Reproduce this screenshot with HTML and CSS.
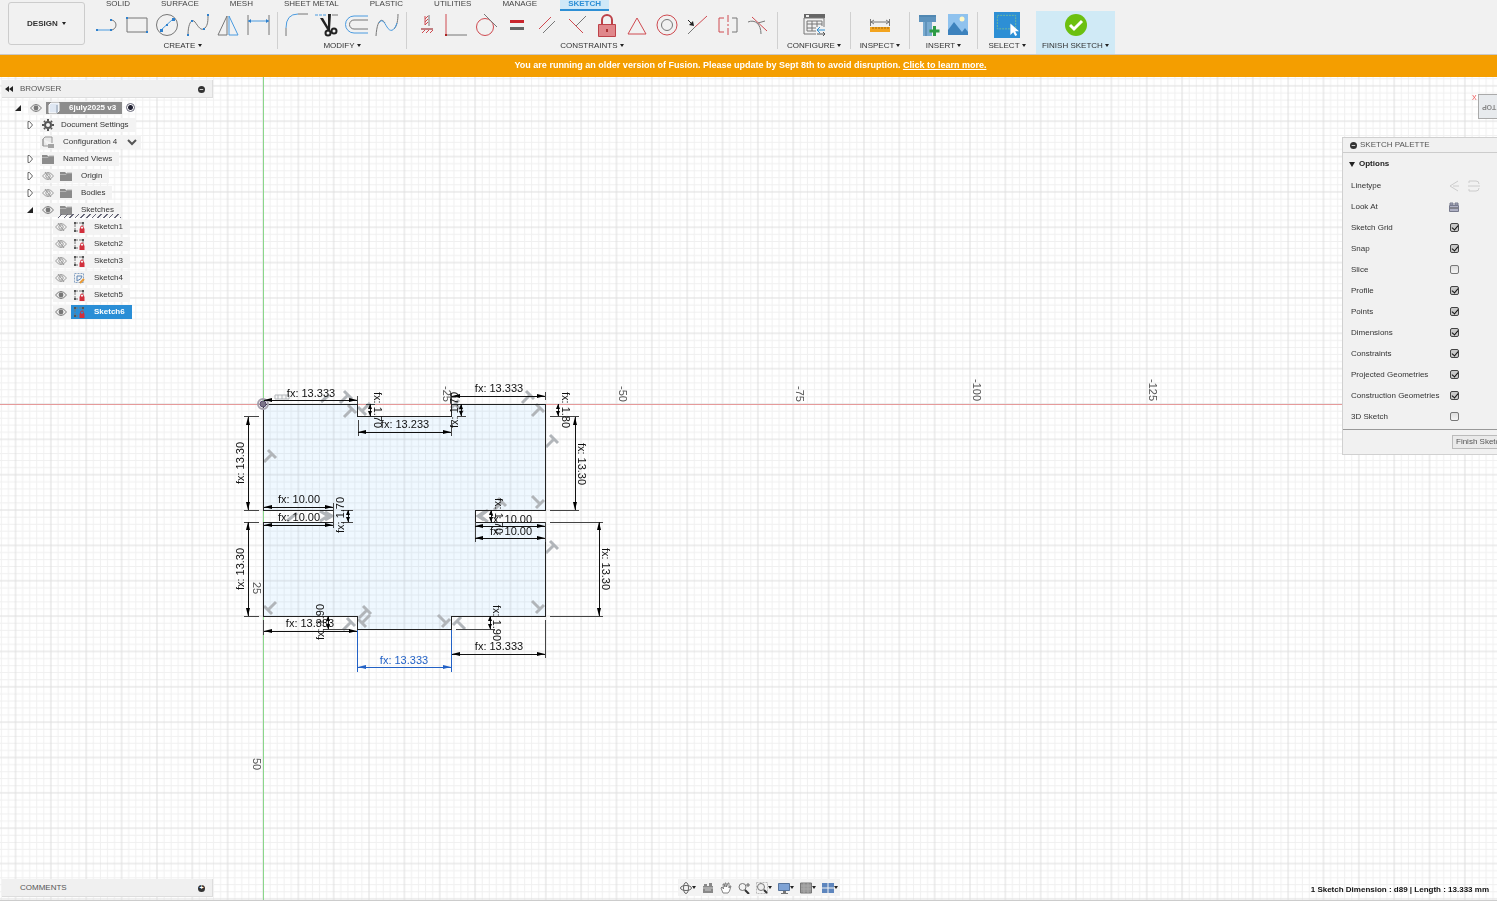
FILE: index.html
```html
<!DOCTYPE html>
<html lang="en">
<head>
  <meta charset="UTF-8">
  <meta name="viewport" content="width=device-width, initial-scale=1.0">
  <title>6july2025 v3</title>
  <link rel="stylesheet" href="styles.css">
</head>
<body>
  <!-- shared icons -->
  <svg class="defs" aria-hidden="true">
    <symbol id="eye" viewBox="0 0 12 12"><path d="M.5 6Q6-1 11.5 6 6 13 .5 6z" fill="#eee" stroke="#777"/><circle cx="6" cy="6" r="2.4" fill="#777"/></symbol>
    <symbol id="eye-off" viewBox="0 0 12 12"><path d="M.5 6Q6-1 11.5 6 6 13 .5 6z" fill="none" stroke="#999"/><circle cx="6" cy="6" r="2.2" fill="none" stroke="#999"/><path d="M3 2l6 8" stroke="#999"/></symbol>
    <symbol id="folder" viewBox="0 0 12 12"><path d="M0 2h5l1 1h6v8H0z" fill="#8b8b8b"/><path d="M0 4.5h6l1-1.5h5" stroke="#b5b5b5" fill="none"/></symbol>
    <symbol id="open" viewBox="0 0 12 12"><path d="M9 3v6H3z" fill="#222"/></symbol>
    <symbol id="closed" viewBox="0 0 12 12"><path d="M4 2.5v7h1.500l3-3.500-3-3.500z" fill="#fff" stroke="#666"/></symbol>
    <symbol id="sketch" viewBox="0 0 12 12"><path d="M2 10V2h8v4M2 10h4" fill="none" stroke="#777" stroke-dasharray="3 1"/><path d="M1 1h2v2H1zM9 1h2v2H9zM1 9h2v2H1z" fill="#555"/><path d="M6.500 7.500h5V12h-5z" fill="#d22f3c"/><path d="M7.500 8V6.500a1.500 1.500 0 0 1 3 0V8" fill="none" stroke="#d22f3c"/></symbol>
    <symbol id="sketch-edit" viewBox="0 0 12 12"><path d="M1.500 1.500h9v9h-9z" fill="none" stroke="#8aa5c4" stroke-dasharray="2 1"/><path d="M4 4h5q0 3-5 5z" fill="none" stroke="#5f86b5"/><path d="M7 11l4-4" stroke="#e99a35" stroke-width="2"/></symbol>
  </svg>

  <header class="ribbon">
    <button class="workspace" type="button">DESIGN <i class="caret"></i></button>
    <div class="ribbon-main">
      <nav class="tabs">
        <a href="#">SOLID</a>
        <a href="#">SURFACE</a>
        <a href="#">MESH</a>
        <a href="#">SHEET METAL</a>
        <a href="#">PLASTIC</a>
        <a href="#">UTILITIES</a>
        <a href="#">MANAGE</a>
        <a href="#" class="active">SKETCH</a>
      </nav>
      <div class="tools">
        <section class="group create">
          <div class="icons">
            <button type="button" aria-label="Line"><svg viewBox="0 0 24 24"><path class="g" d="M16 7a5 5 0 0 1 0 10"/><path class="b" d="M2 17h14"/><path class="bf" d="M1 16h2v2H1zM15 6h2v2h-2zM15 16h2v2h-2z"/></svg></button>
            <button type="button" aria-label="Rectangle"><svg viewBox="0 0 24 24"><path class="g" d="M2 5h20v14H2z"/><path class="bf" d="M1 4h2v2H1zM21 18h2v2h-2z"/></svg></button>
            <button type="button" aria-label="Circle"><svg viewBox="0 0 24 24"><circle class="g" cx="12" cy="12" r="10.500"/><path class="b" d="M6 17L18 6"/><path class="bf" d="M5 16h3v3H5zM17 5h3v3h-3zM11 11h2v2h-2z"/></svg></button>
            <button type="button" aria-label="Spline"><svg viewBox="0 0 24 24"><path class="g" d="M2 22C2 10 6 5 9 9s6 10 10 6c3-3 3-8 3-13"/><path class="bf" d="M1 21h2v2H1zM5 7h2v2H5zM17 15h2v2h-2zM21 1h2v2h-2z"/></svg></button>
            <button type="button" aria-label="Mirror"><svg viewBox="0 0 24 24"><path class="g" d="M11 3v19H2z"/><path class="b" d="M13 3v19h9z"/></svg></button>
            <button type="button" aria-label="Dimension"><svg viewBox="0 0 24 24"><path class="g" d="M2 2v20M23 2v20"/><path class="b" d="M2 8h21"/><path class="bf" d="M2 8l3-2v4zM23 8l-3-2v4z"/></svg></button>
          </div>
          <button class="menu" type="button">CREATE <i class="caret"></i></button>
        </section>
        <section class="group modify">
          <div class="icons">
            <button type="button" aria-label="Fillet"><svg viewBox="0 0 24 24"><path class="b" d="M1 15Q1 1 13 1"/><path class="g" d="M13 1h10M1 15v8"/></svg></button>
            <button type="button" aria-label="Trim"><svg viewBox="0 0 24 24"><path class="b" d="M0 2h12" stroke-dasharray="3 1"/><path class="g" d="M17 2h6"/><path d="M5 5l3 0 7 12-2 1zM13 1h3l-1 16-2 0z" fill="#222"/><g fill="none" stroke="#222" stroke-width="2"><circle cx="13" cy="20" r="2.500"/><circle cx="19" cy="18" r="2.500"/></g></svg></button>
            <button type="button" aria-label="Offset"><svg viewBox="0 0 24 24"><path class="b" d="M23 3H9a8.500 8.500 0 0 0 0 17h14"/><path class="g" d="M23 7H9a4.500 4.500 0 0 0 0 9h14"/></svg></button>
            <button type="button" aria-label="Curvature"><svg viewBox="0 0 24 24"><path class="g" d="M1 23C2 8 6 4 10 10M19 16c3-3 4-9 4-15"/><path class="b" d="M4 10c3-5 5-1 8 4s7 5 10-4"/></svg></button>
          </div>
          <button class="menu" type="button">MODIFY <i class="caret"></i></button>
        </section>
        <section class="group constraints">
          <div class="icons">
            <button type="button" aria-label="Horizontal/Vertical"><svg viewBox="0 0 24 24"><path class="g" d="M15 2v11M7 16h12"/><path class="r" d="M11 6l3-3M11 9l3-3M11 12l3-3M8 20l3-3M12 20l3-3M16 20l3-3M7 16h12M11 3v9"/></svg></button>
            <button type="button" aria-label="Coincident"><svg viewBox="0 0 24 24"><path class="r" d="M2 1v21"/><path class="g" d="M2 22h21"/><path d="M1 21h2v2H1z" fill="#a22"/></svg></button>
            <button type="button" aria-label="Tangent"><svg viewBox="0 0 24 24"><circle class="r" cx="11" cy="14" r="8.500"/><path class="g" d="M10 1l13 13"/></svg></button>
            <button type="button" aria-label="Equal"><svg viewBox="0 0 24 24"><path d="M5 7h14v3H5z" fill="#c9252d"/><path d="M5 14h14v3H5z" fill="#666"/></svg></button>
            <button type="button" aria-label="Parallel"><svg viewBox="0 0 24 24"><path class="r" d="M4 16L16 4"/><path class="g" d="M8 20L20 8"/></svg></button>
            <button type="button" aria-label="Perpendicular"><svg viewBox="0 0 24 24"><path class="r" d="M4 6l14 14"/><path class="g" d="M11 13L21 3"/></svg></button>
            <button type="button" aria-label="Fix"><svg viewBox="0 0 24 24"><path d="M7 12V7a5 5 0 0 1 10 0v5" fill="none" stroke="#bd4249" stroke-width="2"/><path d="M3.500 11.500h17v12h-17z" fill="#e0878b" stroke="#bd4249"/><path d="M11 16h2v3h-2z" fill="#a33"/></svg></button>
            <button type="button" aria-label="Midpoint"><svg viewBox="0 0 24 24"><path class="r" d="M12 5l9 16H3z"/></svg></button>
            <button type="button" aria-label="Concentric"><svg viewBox="0 0 24 24"><circle class="r" cx="12" cy="12" r="10"/><circle class="g" cx="12" cy="12" r="5.500"/></svg></button>
            <button type="button" aria-label="Collinear"><svg viewBox="0 0 24 24"><path class="g" d="M3 21l7-7"/><path class="r" d="M10 14L22 3"/><path d="M3 7l3 3" stroke="#222"/><path d="M9 13l-1-5-4 4z" fill="#222"/></svg></button>
            <button type="button" aria-label="Symmetry"><svg viewBox="0 0 24 24"><path class="r" d="M8 5H3v14h5"/><path class="g" d="M16 5h5v14h-5"/><path class="r" d="M12 2v21" stroke-dasharray="7 2 2 2"/></svg></button>
            <button type="button" aria-label="Curvature constraint"><svg viewBox="0 0 24 24"><path class="r" d="M6 4l15 14"/><path class="g" d="M2 9c7-3 13 2 13 12M12 10l7-2"/></svg></button>
          </div>
          <button class="menu" type="button">CONSTRAINTS <i class="caret"></i></button>
        </section>
        <section class="group configure">
          <div class="icons">
            <button type="button" aria-label="Configure"><svg viewBox="0 0 24 24"><path d="M2 1h21v4H2z" fill="#666"/><path d="M4 2h3v2H4z" fill="#eee"/><path class="g" d="M22 14V5H2v16h12M5 8h15v5M5 8v10h9M5 11h15M5 15h9M10 8v10M15 8v6"/><path d="M15 17h8M18 14l-3 3 3 3" fill="none" stroke="#2f8fd0"/><path d="M15 21h8M21 19l2 2-2 2" fill="none" stroke="#555"/></svg></button>
          </div>
          <button class="menu" type="button">CONFIGURE <i class="caret"></i></button>
        </section>
        <section class="group inspect">
          <div class="icons">
            <button type="button" aria-label="Measure"><svg viewBox="0 0 24 24"><path d="M2 14h20v5H2z" fill="#f3a41f"/><path d="M5 14v2M8 14v2M11 14v2M14 14v2M17 14v2M20 14v2" stroke="#a66908"/><path class="g" d="M2.500 6v7M21.500 6v7M3 9h18M6 7L3 9l3 2M18 7l3 2-3 2"/></svg></button>
          </div>
          <button class="menu" type="button">INSPECT <i class="caret"></i></button>
        </section>
        <section class="group insert">
          <div class="icons">
            <button type="button" aria-label="Insert fastener"><svg viewBox="0 0 24 24"><path d="M2 2h17v7H2z" fill="#5d93bd"/><path d="M6 9h9v14H6z" fill="#7aabd0"/><path d="M2 3h17M9 9v14" stroke="#477da7"/><path d="M17.500 13v10M12.500 18h10" stroke="#2c9b44" stroke-width="3"/></svg></button>
            <button type="button" aria-label="Insert image"><svg viewBox="0 0 24 24"><path d="M2 1h20v21H2z" fill="#8fc2ee"/><path d="M2 17l6-8 8 10 3-4 3 4v3H2z" fill="#3d82bd"/><circle cx="16" cy="6" r="2.500" fill="#fff8c8"/></svg></button>
          </div>
          <button class="menu" type="button">INSERT <i class="caret"></i></button>
        </section>
        <section class="group select">
          <div class="icons">
            <button type="button" aria-label="Select"><svg class="large" viewBox="0 0 27 27"><path d="M0 0h27v27H0z" fill="#2d8fd5"/><path d="M3.500 3.500h19v14h-19z" fill="none" stroke="#71b99b" stroke-dasharray="2 1"/><path d="M17 12v12l3-3 2 4 2-1-2-4h4z" fill="#fff"/></svg></button>
          </div>
          <button class="menu" type="button">SELECT <i class="caret"></i></button>
        </section>
        <section class="group finish">
          <div class="icons">
            <button type="button" aria-label="Finish sketch"><svg viewBox="0 0 24 24"><circle cx="12" cy="12" r="11" fill="#6cc010"/><path d="M6 12l4 4 8-8" fill="none" stroke="#fff" stroke-width="3"/></svg></button>
          </div>
          <button class="menu" type="button">FINISH SKETCH <i class="caret"></i></button>
        </section>
      </div>
    </div>
  </header>

  <div class="notice">You are running an older version of Fusion. Please update by Sept 8th to avoid disruption. <a href="#">Click to learn more.</a></div>

  <main class="stage">
    <svg class="canvas" role="img" aria-label="Sketch6">
      <defs>
        <pattern id="grid" width="25" height="25" patternUnits="userSpaceOnUse" patternTransform="translate(263 404) scale(1.414)">
          <path d="M5 0v25M10 0v25M15 0v25M20 0v25M0 5h25M0 10h25M0 15h25M0 20h25" stroke="#f0f0f0" stroke-width=".7"/>
          <path d="M0 0v25M0 0h25M25 0v25M0 25h25" stroke="#dedede" stroke-width=".7"/>
        </pattern>
        <marker id="arrow" viewBox="0 0 8 4" refX="8" refY="2" markerWidth="8" markerHeight="4" markerUnits="userSpaceOnUse" orient="auto-start-reverse"><path d="M0 0l8 2-8 2z"/></marker>
        <marker id="arrow-active" viewBox="0 0 8 4" refX="8" refY="2" markerWidth="8" markerHeight="4" markerUnits="userSpaceOnUse" orient="auto-start-reverse"><path d="M0 0l8 2-8 2z" fill="#2362c6"/></marker>
        <marker id="arrow-s" viewBox="0 0 5 4" refX="5" refY="2" markerWidth="5" markerHeight="4" markerUnits="userSpaceOnUse" orient="auto-start-reverse"><path d="M0 0l5 2-5 2z"/></marker>
        <path id="perp" d="M-6 6L2-2M-2-6L6 2"/>
      </defs>
      <g transform="translate(0 -77)">
        <path class="profile" d="M263 404H357V416H451V404H545V510H475V522H545V616H451V629H357V616H263V522H333V510H263z"/>
        <rect class="grid" y="77" width="100%" height="100%" fill="url(#grid)"/>
        <line class="axis-x" x1="0" y1="404" x2="100%" y2="404"/>
        <path class="axis-y" d="M263 77V2000"/>
        <g class="scale">
          <text transform="translate(443 394) rotate(90)">-25</text>
          <text transform="translate(619 394) rotate(90)">-50</text>
          <text transform="translate(796 394) rotate(90)">-75</text>
          <text transform="translate(973 390) rotate(90)">-100</text>
          <text transform="translate(1149 390) rotate(90)">-125</text>
          <text transform="translate(253 588) rotate(90)">25</text>
          <text transform="translate(253 764) rotate(90)">50</text>
        </g>
        <g class="glyphs">
          <use href="#perp" x="270" y="456"/><use href="#perp" x="346" y="397"/><use href="#perp" x="350" y="411"/>
          <use href="#perp" x="528" y="397"/><use href="#perp" x="538" y="410"/><use href="#perp" x="552" y="441"/>
          <use href="#perp" x="552" y="547"/><use href="#perp" x="500" y="504"/><use href="#perp" x="365" y="612"/><use href="#perp" x="349" y="624"/>
          <use href="#perp" transform="translate(364 409) rotate(180)"/>
          <use href="#perp" transform="translate(457 406) rotate(270)"/>
          <use href="#perp" transform="translate(538 502) rotate(90)"/>
          <use href="#perp" transform="translate(270 608) rotate(180)"/>
          <use href="#perp" transform="translate(364 621) rotate(180)"/>
          <use href="#perp" transform="translate(444 621) rotate(90)"/>
          <use href="#perp" transform="translate(459 623) rotate(270)"/>
          <use href="#perp" transform="translate(538 607) rotate(90)"/>
          <path d="M321 402l8-7M287 521l10-8M320 511l8 5-8 5M325 512l7 4-7 4M488 510l-8 6 8 6M484 512l-6 4 6 4"/>
          <path class="thin" d="M275 399v-4h14v4zM278 395v4M282 395v4M286 395v4"/>
        </g>
        <path class="outline" d="M263 404H357V416H451V404H545V510H475V522H545V616H451V629H357V616H263V522H333V510H263z"/>
        <g class="origin"><circle cx="263" cy="404" r="5"/><circle class="dot" cx="263" cy="404" r="3"/></g>
        <!-- extension lines -->
        <path class="ext" d="M357 396V404M358 420V436M451 420V436M451 393V404M545 392V400M366 404H375M457 416H466M550 416H579M550 510H579M550 522H603M550 616H603M244 416H259M244 510H259M244 522H259M244 616H259M333 503V528M341 510H353M341 522H353M475 522V542M545 522V542M263 620V635M323 629H350M456 629H495M545 620V658"/>
        <path class="ext active" d="M357 630V672M451 630V672"/>
        <!-- dimension lines -->
        <g class="dim">
          <path d="M264 400H357"/><path d="M358 432H451"/><path d="M452 396H545"/>
          <path d="M575 417V510"/><path d="M599 522V616"/><path d="M248 417V510"/><path d="M248 522V616"/>
          <path d="M264 507H333"/><path d="M264 525H333"/><path d="M475 526H545"/><path d="M475 538H545"/>
          <path d="M264 631H357"/><path d="M452 654H545"/><path class="active" d="M358 667H451"/>
        </g>
        <g class="dim short">
          <path d="M370 404V416"/><path d="M461 404V416"/><path d="M558 404V416"/><path d="M348 510V522"/>
          <path d="M491 510V522"/><path d="M328 616V629"/><path d="M490 616V629"/>
        </g>
        <g class="values">
          <text x="311" y="397">fx: 13.333</text>
          <text x="405" y="428">fx: 13.233</text>
          <text x="499" y="392">fx: 13.333</text>
          <text x="299" y="503">fx: 10.00</text>
          <text x="299" y="521">fx: 10.00</text>
          <text x="511" y="523">fx: 10.00</text>
          <text x="511" y="535">fx: 10.00</text>
          <text x="310" y="627">fx: 13.333</text>
          <text x="499" y="650">fx: 13.333</text>
          <text class="active" x="404" y="664">fx: 13.333</text>
          <text transform="translate(374 410) rotate(90)">fx: 1.70</text>
          <text transform="translate(458 410) rotate(-90)">fx: 1.70</text>
          <text transform="translate(562 410) rotate(90)">fx: 1.80</text>
          <text transform="translate(578 464) rotate(90)">fx: 13.30</text>
          <text transform="translate(602 569) rotate(90)">fx: 13.30</text>
          <text transform="translate(244 463) rotate(-90)">fx: 13.30</text>
          <text transform="translate(244 569) rotate(-90)">fx: 13.30</text>
          <text transform="translate(344 515) rotate(-90)">fx: 1.70</text>
          <text transform="translate(495 516) rotate(90)">fx: 1.70</text>
          <text transform="translate(324 622) rotate(-90)">fx: 1.90</text>
          <text transform="translate(493 623) rotate(90)">fx: 1.90</text>
        </g>
      </g>
    </svg>

    <aside class="left">
      <section class="browser">
        <div class="bar"><button type="button" aria-label="Collapse"><svg viewBox="0 0 12 12"><path d="M7 3v6L3 6zM11 3v6L7 6z" fill="#222"/></svg></button><span>BROWSER</span><button type="button" class="round" aria-label="Minimize">–</button></div>
        <ul class="tree">
          <li class="root"><svg><use href="#open"/></svg><div class="chip"><svg><use href="#eye"/></svg><span class="doc"><svg viewBox="0 0 12 12"><path d="M1 3l2-2h8v8l-2 2H1z" fill="#dfe7f2" stroke="#fff"/><path d="M9 3v8" stroke="#8796a8"/></svg>6july2025 v3</span></div><input type="radio" checked aria-label="Activate component"></li>
          <li><svg><use href="#closed"/></svg><div class="chip"><svg viewBox="0 0 12 12"><circle cx="6" cy="6" r="3" fill="none" stroke="#555" stroke-width="2"/><path d="M6 0v2M6 10v2M0 6h2M10 6h2M2 2l1 1M9 9l1 1M2 10l1-1M9 3l1-1" stroke="#555" stroke-width="2"/></svg><span class="near">Document Settings</span></div></li>
          <li class="leaf"><div class="chip"><svg viewBox="0 0 12 12"><path d="M1 3l2-2h7v6M1 3v7h5M1 10V3" fill="#e8e8e8" stroke="#999"/><path d="M6 9h6M6 11h6" stroke="#555"/></svg><span>Configuration 4</span><svg class="chev" viewBox="0 0 12 12"><path d="M2 4l4 4 4-4" fill="none" stroke="#555" stroke-width="2"/></svg></div></li>
          <li><svg><use href="#closed"/></svg><div class="chip"><svg><use href="#folder"/></svg><span>Named Views</span></div></li>
          <li><svg><use href="#closed"/></svg><div class="chip"><svg><use href="#eye-off"/></svg><svg><use href="#folder"/></svg><span>Origin</span></div></li>
          <li><svg><use href="#closed"/></svg><div class="chip"><svg><use href="#eye-off"/></svg><svg><use href="#folder"/></svg><span>Bodies</span></div></li>
          <li><svg><use href="#open"/></svg><div class="chip editing"><svg><use href="#eye"/></svg><svg><use href="#folder"/></svg><span>Sketches</span></div></li>
          <li class="child"><div class="chip"><svg><use href="#eye-off"/></svg><svg><use href="#sketch"/></svg><span>Sketch1</span></div></li>
          <li class="child"><div class="chip"><svg><use href="#eye-off"/></svg><svg><use href="#sketch"/></svg><span>Sketch2</span></div></li>
          <li class="child"><div class="chip"><svg><use href="#eye-off"/></svg><svg><use href="#sketch"/></svg><span>Sketch3</span></div></li>
          <li class="child"><div class="chip"><svg><use href="#eye-off"/></svg><svg><use href="#sketch-edit"/></svg><span>Sketch4</span></div></li>
          <li class="child"><div class="chip"><svg><use href="#eye"/></svg><svg><use href="#sketch"/></svg><span>Sketch5</span></div></li>
          <li class="child"><div class="chip"><svg><use href="#eye"/></svg><div class="selected"><svg><use href="#sketch"/></svg><span>Sketch6</span></div></div></li>
        </ul>
      </section>
      <section class="bar comments"><span>COMMENTS</span><button type="button" class="round" aria-label="Add comment">+</button></section>
    </aside>

    <div class="navbar">
      <button type="button" class="drop" aria-label="Orbit"><svg viewBox="0 0 12 12"><g fill="none" stroke="#666"><ellipse cx="6" cy="6" rx="5.500" ry="2.500"/><ellipse cx="6" cy="6" rx="2.500" ry="5.500"/></g></svg><i class="caret"></i></button>
      <button type="button" aria-label="Look at"><svg viewBox="0 0 12 12"><path d="M1 4h10v7H1zM2 2h3v2H2zM7 1h3v3H7z" fill="#888"/><path d="M1 6h10M3 8h6" stroke="#ccc"/></svg></button>
      <button type="button" aria-label="Pan"><svg viewBox="0 0 12 12"><path d="M3 11L1 6l1-1 1.500 2L3 2h1l1 3V1h1l.5 4L8 1h1v5l1-2h1L9.500 9 8 11z" fill="#fff" stroke="#666" stroke-width=".8"/></svg></button>
      <button type="button" aria-label="Zoom"><svg viewBox="0 0 12 12"><circle cx="4.500" cy="5" r="3.500" fill="none" stroke="#777"/><path d="M7 8l4 4" stroke="#333" stroke-width="2"/><path d="M10 1v4M8 3h4" stroke="#666"/></svg></button>
      <button type="button" class="drop" aria-label="Fit"><svg viewBox="0 0 12 12"><path d="M.5.5h11v11H.5z" fill="none" stroke="#bbb" stroke-dasharray="2 1"/><circle cx="5" cy="5" r="3.500" fill="#eee" stroke="#777"/><path d="M8 8l3 3" stroke="#333" stroke-width="2"/></svg><i class="caret"></i></button>
      <button type="button" class="drop" aria-label="Display settings"><svg viewBox="0 0 12 12"><path d="M.5 1.500h11v7H.5z" fill="#7fa3d5" stroke="#57749c"/><path d="M5 9h3v2h2v1H3v-1h2z" fill="#777"/></svg><i class="caret"></i></button>
      <button type="button" class="drop" aria-label="Grid and snaps"><svg viewBox="0 0 12 12"><path d="M.5 1h11v10H.5z" fill="#999" stroke="#777"/><path d="M1 4h10M1 7h10M4 1v10M8 1v10" stroke="#aaa"/></svg><i class="caret"></i></button>
      <button type="button" class="drop" aria-label="Viewports"><svg viewBox="0 0 12 12"><path d="M0 1h5.500v4.500H0zM6.500 1H12v4.500H6.500zM0 6.500h5.500V11H0zM6.500 6.500H12V11H6.500z" fill="#5d85bd"/></svg><i class="caret"></i></button>
    </div>

    <aside class="right">
      <div class="viewcube"><span class="x">X</span><button type="button"><span>TOP</span></button></div>
      <section class="palette">
        <h2><button type="button" class="round" aria-label="Minimize palette">–</button>SKETCH PALETTE</h2>
        <h3><i class="caret"></i>Options</h3>
        <div class="opt"><span>Linetype</span><svg viewBox="0 0 12 12"><path d="M10 1L2 6l8 5M5 6h6" fill="none" stroke="#ccc"/></svg><svg class="second" viewBox="0 0 12 12"><path d="M1 3V1h7q3 0 3 3M1 9v2h7q3 0 3-3M0 6h12" fill="none" stroke="#ccc"/></svg></div>
        <div class="opt"><span>Look At</span><svg viewBox="0 0 12 12"><path d="M1.500 4.500h9v6h-9zM2 2h3v2H2zM7 2h3v2H7z" fill="#aeb0c4" stroke="#777a8d"/><path d="M2 7h8" stroke="#555"/></svg></div>
        <label class="opt"><span>Sketch Grid</span><input type="checkbox" checked></label>
        <label class="opt"><span>Snap</span><input type="checkbox" checked></label>
        <label class="opt"><span>Slice</span><input type="checkbox"></label>
        <label class="opt"><span>Profile</span><input type="checkbox" checked></label>
        <label class="opt"><span>Points</span><input type="checkbox" checked></label>
        <label class="opt"><span>Dimensions</span><input type="checkbox" checked></label>
        <label class="opt"><span>Constraints</span><input type="checkbox" checked></label>
        <label class="opt"><span>Projected Geometries</span><input type="checkbox" checked></label>
        <label class="opt"><span>Construction Geometries</span><input type="checkbox" checked></label>
        <label class="opt"><span>3D Sketch</span><input type="checkbox"></label>
        <div class="palette-foot"><button type="button">Finish Sketch</button></div>
      </section>
      <p class="status">1 Sketch Dimension : d89 | Length : 13.333 mm</p>
    </aside>
  </main>
</body>
</html>
```

FILE: styles.css
```css
* { box-sizing: border-box; }
body { margin: 0; height: 100vh; display: flex; flex-direction: column; overflow: hidden; background: #fff; color: #333; font: 8px/10px "Liberation Sans", Arial, sans-serif; }
button { font: inherit; color: inherit; background: none; border: 0; padding: 0; cursor: pointer; white-space: nowrap; }
svg { display: block; flex: none; width: 12px; height: 12px; }
.defs { position: absolute; width: 0; height: 0; }
.caret { display: inline-block; border: 2px solid transparent; border-top: 3px solid #222; border-bottom: 0; vertical-align: 1px; }

/* ribbon */
.ribbon { display: flex; flex: none; overflow: hidden; background: #f1f1f1; border-bottom: 1px solid #c9c9c9; }
.workspace { width: 77px; height: 43px; margin: 2px 3px 0 8px; border: 1px solid #ccc; border-radius: 3px; font-weight: bold; }
.workspace .caret { margin-left: 2px; }
.ribbon-main { flex: 1; }
.tabs { display: flex; align-items: flex-end; gap: 15px; height: 11px; padding-left: 10px; }
.tabs a { padding: 0 8px 1px; border-bottom: 2px solid transparent; color: #444; line-height: 9px; text-decoration: none; white-space: nowrap; }
.tabs .active { background: #cfe9f8; border-bottom-color: #2d8fd5; color: #2d8fd5; font-weight: bold; }
.tools { display: flex; height: 43px; }
.group { display: flex; flex-direction: column; height: 37px; margin-top: 1px; border-right: 1px solid #d0d0d0; text-align: center; }
.icons { display: flex; flex: none; justify-content: space-around; align-items: center; height: 26px; padding: 0 4px; }
.icons svg { width: 24px; height: 24px; }
.icons svg.large { width: 26px; height: 26px; }
.menu { flex: none; margin-top: 2px; line-height: 11px; }
.create { width: 190px; }
.modify { width: 129px; }
.constraints { width: 371px; }
.configure { width: 73px; }
.inspect { width: 59px; }
.insert { width: 68px; }
.select { width: 58px; border: 0; }
.finish { width: 79px; height: 43px; margin-top: 0; padding-top: 1px; border: 0; background: #d0eaf6; }
.g, .b, .r { fill: none; stroke: #777; }
.b { stroke: #4a9be0; }
.r { stroke: #cf4a50; }
.bf { fill: #2f80cc; }

.notice { flex: none; height: 22px; background: #f49e00; color: #fff; font-size: 9px; font-weight: bold; line-height: 21px; text-align: center; padding-left: 4px; }
.notice a { color: inherit; }

/* canvas and floating panels */
.stage { position: relative; flex: 1; min-height: 0; display: flex; justify-content: space-between; margin-bottom: 2px; border-bottom: 1px solid #ccc; }
.canvas { position: absolute; inset: 0; width: 100%; height: 100%; }
.profile { fill: #eff8ff; }
.grid { mix-blend-mode: multiply; }
.axis-x { stroke: #e59a9a; shape-rendering: crispEdges; }
.axis-y { fill: none; stroke: #8ad68a; shape-rendering: crispEdges; }
.outline { fill: none; stroke: #222; shape-rendering: crispEdges; }
.ext { fill: none; stroke: #444; shape-rendering: crispEdges; }
.dim path { fill: none; stroke: #111; marker-start: url(#arrow); marker-end: url(#arrow); shape-rendering: crispEdges; }
.short path { marker-start: url(#arrow-s); marker-end: url(#arrow-s); }
.ext.active, .dim .active { stroke: #2362c6; }
.dim .active { marker-start: url(#arrow-active); marker-end: url(#arrow-active); }
.scale text, .values text { font-size: 11px; text-anchor: middle; fill: #111; }
.scale text { fill: #555; }
.values .active { fill: #2362c6; }
.glyphs { fill: none; stroke: #b1b5b9; stroke-width: 3; }
.glyphs .thin { stroke-width: 1; }
.origin { fill: none; stroke: #a5a1ad; stroke-width: 2; }
.origin .dot { fill: #7b7488; stroke: #554b6b; stroke-width: 1; }

.left { position: relative; width: 213px; padding: 3px 0 3px 2px; display: flex; flex-direction: column; justify-content: space-between; }
.bar { display: flex; align-items: center; height: 18px; padding: 1px 7px 0 0; background: #f0f0f0; border: 1px solid #ddd; border-width: 0 1px 1px 0; color: #555; }
.bar span { flex: 1; padding-left: 6px; }
.bar.comments span { padding-left: 18px; }
.round { width: 7px; height: 7px; border-radius: 50%; background: #333; color: #fff; font-size: 7px; font-weight: bold; line-height: 6px; }
.tree { list-style: none; margin: 1px 0 0; padding: 0; }
.tree li { display: flex; align-items: center; gap: 4px; height: 17px; padding-left: 22px; white-space: nowrap; }
.tree .root { padding-left: 10px; }
.tree .leaf { padding-left: 38px; }
.tree .child { padding-left: 51px; }
.chip { position: relative; display: flex; align-items: center; gap: 6px; height: 14px; padding: 0 7px 0 2px; background: #f3f3f3; }
.chip span { padding-left: 3px; }
.chip .near { padding-left: 1px; }
.chip .chev { margin-left: 3px; margin-right: -4px; }
.root .chip { gap: 4px; padding-right: 0; }
.chip .doc { display: flex; gap: 9px; align-items: center; height: 12px; padding: 0 6px 0 2px; background: #8c8c8c; color: #fff; font-weight: bold; }
.root input { appearance: none; width: 9px; height: 9px; margin: 0; border: 1px solid #667; border-radius: 50%; background: radial-gradient(#223 0 2px, #fff 3px); }
.editing::after { content: ""; position: absolute; left: 18px; right: 0; bottom: -1px; height: 4px; background: repeating-linear-gradient(-45deg, #667 0 1px, transparent 1px 4px); }
.child .chip:has(.selected) { padding-right: 0; gap: 4px; }
.selected { display: flex; align-items: center; gap: 6px; height: 14px; padding: 0 7px 0 2px; background: #2a8ed6; color: #fff; font-weight: bold; }

.navbar { position: relative; align-self: flex-end; display: flex; align-items: center; gap: 6px; height: 17px; margin: 0 0 4px 20px; padding: 0 2px; background: #f3f3f3; }
.navbar button { display: flex; align-items: center; }

.right { position: relative; width: 213px; display: flex; flex-direction: column; align-items: flex-end; }
.viewcube { display: flex; align-items: flex-start; gap: 1px; margin-top: 17px; overflow: hidden; width: 25px; }
.viewcube .x { color: #e55; font-size: 7px; line-height: 7px; }
.viewcube button { flex: none; width: 30px; height: 25px; padding-left: 3px; border: 1px solid #aaa; background: #e8ebee; color: #888; font-size: 7px; font-weight: bold; text-align: left; }
.viewcube button span { display: inline-block; transform: rotate(180deg); }
.palette { width: 155px; margin-top: 18px; overflow: hidden; background: #f1f1f1; border: 1px solid #d0d0d0; border-right: 0; }
.palette h2 { display: flex; align-items: center; gap: 3px; height: 15px; margin: 0; padding-left: 7px; border-bottom: 1px solid #ccc; font-size: 8px; font-weight: normal; color: #555; }
.palette h3 { display: flex; align-items: center; gap: 4px; height: 22px; margin: 0; padding-left: 6px; font-size: 8px; color: #222; }
.palette h3 .caret { border-width: 5px 3px 0; }
.opt { display: flex; align-items: center; height: 21px; padding-left: 8px; }
.opt span { width: 97px; }
.opt .second { margin-left: 8px; }
.opt input { position: relative; appearance: none; width: 9px; height: 9px; margin: 0 0 0 2px; border: 1px solid #777; border-radius: 2px; background: linear-gradient(#ddd, #f5f5f5); }
.opt input:checked { border-color: #444; background: #c9c9c9; }
.opt input:checked::after { content: ""; position: absolute; left: 2px; top: 0; width: 3px; height: 5px; border: solid #111; border-width: 0 1px 1px 0; transform: rotate(40deg); }
.palette-foot { height: 25px; margin-top: 2px; padding: 5px 0 0 109px; border-top: 1px solid #999; }
.palette-foot button { width: 70px; height: 14px; padding-left: 3px; border: 1px solid #bbb; background: #eaeaea; color: #555; font-size: 8px; line-height: 12px; text-align: left; }
.status { margin: auto 8px 5px 0; color: #111; font-weight: bold; white-space: nowrap; }
```
